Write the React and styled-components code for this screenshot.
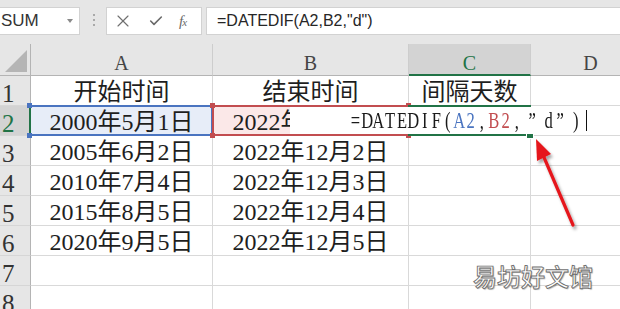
import React from 'react';
import styled, { createGlobalStyle, css } from 'styled-components';
import { X, Check } from 'lucide-react';

const GREEN = '#217346';
const BLUE = '#4a74c0';
const RED = '#c24d50';

const GlobalStyle = createGlobalStyle`
  html, body { margin: 0; padding: 0; background: #fff; }
  body { font-family: "Liberation Sans", "Noto Sans", sans-serif; }
`;

const Page = styled.div`
  position: relative;
  width: 620px;
  height: 309px;
  overflow: hidden;
  background: #fff;
`;

/* ---------- formula bar ---------- */
const FormulaBar = styled.div`
  display: flex;
  align-items: flex-start;
  height: 44px;
  box-sizing: border-box;
  padding-top: 7px;
  background: #e6e6e6;
`;

const NameBox = styled.div`
  width: 81px;
  margin-left: -1px;
  height: 28px;
  box-sizing: border-box;
  background: #fff;
  border: 1px solid #d2d2d2;
  display: flex;
  align-items: center;
  justify-content: space-between;
  padding: 0 6px 0 1px;
  font-size: 17px;
  color: #333;
`;

const Caret = styled.span`
  width: 0;
  height: 0;
  border-left: 3.5px solid transparent;
  border-right: 3.5px solid transparent;
  border-top: 4px solid #8a8a8a;
`;

const Grip = styled.div`
  display: flex;
  flex-direction: column;
  gap: 3px;
  margin: 7px 0 0 13px;
`;

const GripDot = styled.span`
  width: 2px;
  height: 2px;
  background: #a9a9a9;
`;

const ActionBox = styled.div`
  margin-left: 11px;
  width: 96px;
  height: 28px;
  box-sizing: border-box;
  background: #fff;
  border: 1px solid #d2d2d2;
  display: flex;
  align-items: center;
  padding-left: 6px;
  gap: 15px;
  color: #6e6e6e;
`;

const Fx = styled.span`
  font-family: "Liberation Serif", serif;
  font-style: italic;
  font-size: 15px;
  color: #6a6a6a;
  letter-spacing: -1px;
`;

const FxSub = styled.span`
  font-size: 11px;
`;

const FormulaInput = styled.div`
  margin-left: 4px;
  flex: 1;
  height: 28px;
  box-sizing: border-box;
  background: #fff;
  border: 1px solid #d2d2d2;
  border-right: none;
  padding-left: 10px;
  display: flex;
  align-items: center;
  font-size: 16px;
  color: #262626;
`;

/* ---------- sheet ---------- */
const Sheet = styled.div`
  display: grid;
  grid-template-columns: 31px 182px 196px 122px 120px;
  grid-template-rows: 32px repeat(8, 30px);
  font-family: "Liberation Serif", "Noto Sans CJK SC", serif;
`;

const Corner = styled.div`
  background: #e6e6e6;
  border-right: 1px solid #b4b4b4;
  border-bottom: 1px solid #b4b4b4;
  display: flex;
  align-items: flex-end;
  justify-content: flex-end;
  padding: 0 3px 3px 0;
`;

const ColHeader = styled.div`
  background: #e6e6e6;
  border-right: 1px solid #cdcdcd;
  border-bottom: 1px solid #b4b4b4;
  text-align: center;
  font-size: 20px;
  line-height: 38px;
  color: #454545;
  overflow: hidden;
  ${(p) =>
    p.$active &&
    css`
      background: #d3d3d3;
      color: ${GREEN};
      border-bottom: 2px solid ${GREEN};
    `}
`;

const RowHeader = styled.div`
  background: #e6e6e6;
  border-right: 1px solid #b4b4b4;
  border-bottom: 1px solid #d6d6d6;
  font-size: 25px;
  line-height: 35px;
  padding-left: 2px;
  color: #333;
  overflow: hidden;
  ${(p) =>
    p.$active &&
    css`
      background: #d3d3d3;
      color: ${GREEN};
      border-right: 2px solid ${GREEN};
    `}
`;

const Cell = styled.div`
  position: relative;
  border-right: 1px solid #d9d9d9;
  border-bottom: 1px solid #d9d9d9;
  background: ${(p) => p.$fill || '#fff'};
  font-size: 24px;
  line-height: 33px;
  text-align: center;
  white-space: nowrap;
  color: #1e1e1e;
`;

const Frame = styled.span`
  position: absolute;
  top: -1px;
  bottom: -1px;
  left: ${(p) => (p.$open ? '0' : '-1px')};
  right: -1px;
  border: 2px solid ${(p) => p.$color};
  ${(p) => p.$open && 'border-left: none;'}
  pointer-events: none;
  z-index: 3;
`;

const Knob = styled.span`
  position: absolute;
  width: 5px;
  height: 5px;
  background: ${(p) => p.$color};
  ${(p) => p.$v}: -4px;
  ${(p) => p.$h}: -4px;
`;

const FillHandle = styled.span`
  position: absolute;
  right: -5px;
  bottom: -5px;
  width: 6px;
  height: 6px;
  background: ${GREEN};
  border: 1px solid #fff;
  z-index: 5;
`;

/* ---------- overlays ---------- */
const Editor = styled.div`
  position: absolute;
  left: 290px;
  top: 107px;
  width: 330px;
  height: 27px;
  box-sizing: border-box;
  padding-left: 60px;
  background: #fff;
  z-index: 4;
  display: flex;
  align-items: center;
  font-family: "Liberation Serif", "Noto Sans CJK SC", serif;
  font-size: 23px;
  color: #1a1a1a;
  white-space: nowrap;
`;

const Glyph = styled.span`
  display: inline-flex;
  justify-content: center;
  width: ${(p) => p.$w || 11.5}px;
  color: ${(p) => p.$color || 'inherit'};
`;

const GlyphInk = styled.span`
  display: inline-block;
  transform: scaleX(0.72);
`;

const Cursor = styled.span`
  width: 1px;
  height: 21px;
  background: #111;
`;

const ArrowLayer = styled.svg`
  position: absolute;
  left: 0;
  top: 0;
  width: 620px;
  height: 309px;
  pointer-events: none;
  z-index: 6;
`;

const Watermark = styled.div`
  position: absolute;
  left: 473px;
  top: 264px;
  font-family: "Noto Sans CJK SC", sans-serif;
  font-size: 24px;
  font-weight: 500;
  line-height: 1;
  color: #ffffff;
  -webkit-text-stroke: 0.9px #707070;
  text-shadow: 1px 1px 1px rgba(0, 0, 0, 0.3);
  z-index: 7;
`;

const columns = ['A', 'B', 'C', 'D'];

const rows = [
  ['开始时间', '结束时间', '间隔天数', ''],
  ['2000年5月1日', '2022年12月1日', '', ''],
  ['2005年6月2日', '2022年12月2日', '', ''],
  ['2010年7月4日', '2022年12月3日', '', ''],
  ['2015年8月5日', '2022年12月4日', '', ''],
  ['2020年9月5日', '2022年12月5日', '', ''],
  ['', '', '', ''],
  ['', '', '', ''],
];

const formula = [
  ['='], ['D'], ['A'], ['T'], ['E'], ['D'], ['I'], ['F'], ['('],
  ['A', null, BLUE], ['2', null, BLUE], [','],
  ['B', null, RED], ['2', null, RED], [','],
  ['”', 20], ['d'], ['”'], [')', 20],
];

function Knobs({ color }) {
  return (
    <>
      <Knob $color={color} $v="top" $h="left" />
      <Knob $color={color} $v="top" $h="right" />
      <Knob $color={color} $v="bottom" $h="left" />
      <Knob $color={color} $v="bottom" $h="right" />
    </>
  );
}

function renderCell(r, c, text) {
  const key = `${r}-${c}`;
  if (r === 1 && c === 0) {
    return (
      <Cell key={key} $fill="#e7edf8">
        {text}
        <Frame $color={BLUE} $open>
          <Knobs color={BLUE} />
        </Frame>
      </Cell>
    );
  }
  if (r === 1 && c === 1) {
    return (
      <Cell key={key} $fill="#fbe8e8">
        {text}
        <Frame $color={RED}>
          <Knobs color={RED} />
        </Frame>
      </Cell>
    );
  }
  if (r === 1 && c === 2) {
    return (
      <Cell key={key}>
        {text}
        <Frame $color={GREEN}>
          <FillHandle />
        </Frame>
      </Cell>
    );
  }
  return <Cell key={key}>{text}</Cell>;
}

export default function App() {
  return (
    <Page>
      <GlobalStyle />
      <FormulaBar>
        <NameBox>
          SUM
          <Caret />
        </NameBox>
        <Grip>
          <GripDot />
          <GripDot />
          <GripDot />
        </Grip>
        <ActionBox>
          <X size={20} strokeWidth={1.4} color="#707070" />
          <Check size={16} strokeWidth={2.4} color="#6a6a6a" />
          <Fx>
            f<FxSub>x</FxSub>
          </Fx>
        </ActionBox>
        <FormulaInput>=DATEDIF(A2,B2,"d")</FormulaInput>
      </FormulaBar>

      <Sheet>
        <Corner>
          <svg width="22" height="22" viewBox="0 0 22 22">
            <polygon points="22,0 22,22 0,22" fill="#b5b5b5" />
          </svg>
        </Corner>
        {columns.map((col) => (
          <ColHeader key={`h${col}`} $active={col === 'C'}>
            {col}
          </ColHeader>
        ))}
        {rows.map((row, r) => (
          <React.Fragment key={`r${r}`}>
            <RowHeader $active={r === 1}>{r + 1}</RowHeader>
            {row.map((text, c) => renderCell(r, c, text))}
          </React.Fragment>
        ))}
      </Sheet>

      <Editor>
        {formula.map(([ch, w, color], i) => (
          <Glyph key={i} $w={w} $color={color}>
            <GlyphInk>{ch}</GlyphInk>
          </Glyph>
        ))}
        <Cursor />
      </Editor>

      <ArrowLayer viewBox="0 0 620 309">
        <defs>
          <filter id="arrowShadow" x="-50%" y="-50%" width="200%" height="200%">
            <feDropShadow dx="2" dy="3" stdDeviation="1.6" floodColor="#000" floodOpacity="0.35" />
          </filter>
        </defs>
        <g filter="url(#arrowShadow)">
          <line x1="573" y1="225" x2="543" y2="155" stroke="#e5191c" strokeWidth="3.2" strokeLinecap="round" />
          <polygon points="536,139 551,154 537,161" fill="#e5191c" />
        </g>
      </ArrowLayer>

      <Watermark>易坊好文馆</Watermark>
    </Page>
  );
}
